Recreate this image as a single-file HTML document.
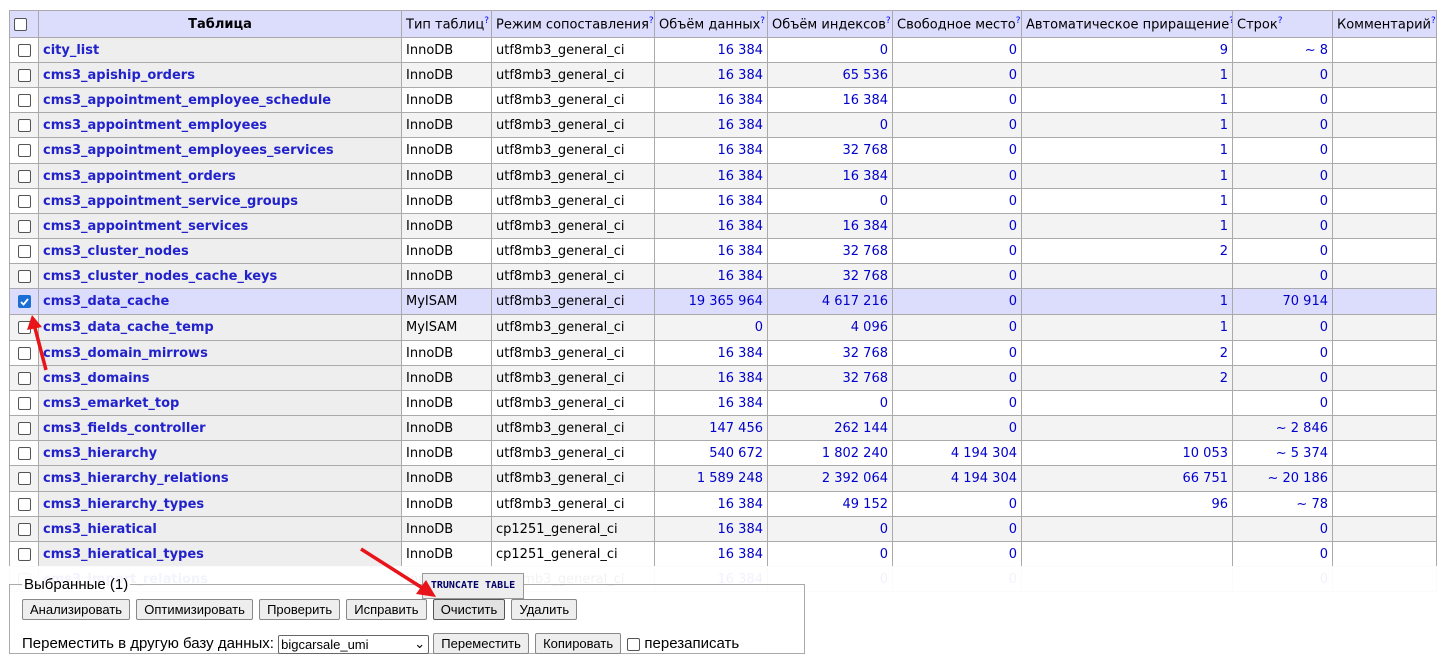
<!DOCTYPE html>
<html><head><meta charset="utf-8"><style>
body{margin:0;background:#fff;width:1445px;height:664px;overflow:hidden;position:relative;font-family:"DejaVu Sans",Verdana,sans-serif;}
table{position:absolute;left:9px;top:10px;width:1427px;border-collapse:collapse;font-size:13px;table-layout:fixed;}
td,th{border:1px solid #aaa;padding:0 4px;height:24px;white-space:nowrap;overflow:hidden;}
th{background:#dcdcfc;font-weight:normal;text-align:left;height:26px;color:#000;}
th sup{color:#00f;font-size:9px;}
td{color:#000;}
td.n{text-align:right;color:#00c;}
td.nm{background:#eee;}
td.nm a{color:#22c;font-weight:bold;text-decoration:none;}
tr.g td{background:#f3f3f3;}
tr.g td.nm{background:#eee;}
tr.s td{background:#dcdcfc;height:25px;}
tr.t td{height:25px;}
td.c{text-align:center;padding:0;}
.cb{display:inline-block;width:11px;height:11px;border:1px solid #555;border-radius:2px;background:#fff;vertical-align:middle;}
.cbk{background:#1a6fd6;border-color:#1a6fd6;position:relative;}
.cover{position:absolute;left:0;top:566px;width:1445px;height:99px;background:rgba(255,255,255,0.95);}
fieldset{position:absolute;left:9px;top:576px;width:770px;height:76px;border:1px solid #aaa;margin:0;padding:0 12px;font-family:"Liberation Sans",Arial,sans-serif;font-size:15px;}
legend{padding:0 2px;font-size:15px;}
.btn{display:inline-block;border:1px solid #888;border-radius:2px;background:#eee;padding:2px 7px;font-size:13px;margin-right:2px;}
.tip{position:absolute;left:422px;top:573px;width:100px;height:24px;background:#eee;border:1px solid #999;font-family:"DejaVu Sans Mono",monospace;font-size:10px;color:#006;font-weight:bold;line-height:24px;text-align:center;}
</style></head><body>
<table>
<colgroup><col style="width:29px"><col style="width:363px"><col style="width:90px"><col style="width:163px"><col style="width:113px"><col style="width:125px"><col style="width:129px"><col style="width:211px"><col style="width:100px"><col style="width:104px"></colgroup>
<tr><th class="c"><span class="cb"></span></th><th style="text-align:center;font-weight:bold">Таблица</th><th>Тип таблиц<sup>?</sup></th><th>Режим сопоставления<sup>?</sup></th><th>Объём данных<sup>?</sup></th><th>Объём индексов<sup>?</sup></th><th>Свободное место<sup>?</sup></th><th>Автоматическое приращение<sup>?</sup></th><th>Строк<sup>?</sup></th><th>Комментарий<sup>?</sup></th></tr>
<tr><td class="c"><span class="cb"></span></td><td class="nm"><a>city_list</a></td><td>InnoDB</td><td>utf8mb3_general_ci</td><td class="n">16 384</td><td class="n">0</td><td class="n">0</td><td class="n">9</td><td class="n">~ 8</td><td></td></tr>
<tr class="g"><td class="c"><span class="cb"></span></td><td class="nm"><a>cms3_apiship_orders</a></td><td>InnoDB</td><td>utf8mb3_general_ci</td><td class="n">16 384</td><td class="n">65 536</td><td class="n">0</td><td class="n">1</td><td class="n">0</td><td></td></tr>
<tr><td class="c"><span class="cb"></span></td><td class="nm"><a>cms3_appointment_employee_schedule</a></td><td>InnoDB</td><td>utf8mb3_general_ci</td><td class="n">16 384</td><td class="n">16 384</td><td class="n">0</td><td class="n">1</td><td class="n">0</td><td></td></tr>
<tr class="g"><td class="c"><span class="cb"></span></td><td class="nm"><a>cms3_appointment_employees</a></td><td>InnoDB</td><td>utf8mb3_general_ci</td><td class="n">16 384</td><td class="n">0</td><td class="n">0</td><td class="n">1</td><td class="n">0</td><td></td></tr>
<tr class="t"><td class="c"><span class="cb"></span></td><td class="nm"><a>cms3_appointment_employees_services</a></td><td>InnoDB</td><td>utf8mb3_general_ci</td><td class="n">16 384</td><td class="n">32 768</td><td class="n">0</td><td class="n">1</td><td class="n">0</td><td></td></tr>
<tr class="g"><td class="c"><span class="cb"></span></td><td class="nm"><a>cms3_appointment_orders</a></td><td>InnoDB</td><td>utf8mb3_general_ci</td><td class="n">16 384</td><td class="n">16 384</td><td class="n">0</td><td class="n">1</td><td class="n">0</td><td></td></tr>
<tr><td class="c"><span class="cb"></span></td><td class="nm"><a>cms3_appointment_service_groups</a></td><td>InnoDB</td><td>utf8mb3_general_ci</td><td class="n">16 384</td><td class="n">0</td><td class="n">0</td><td class="n">1</td><td class="n">0</td><td></td></tr>
<tr class="g"><td class="c"><span class="cb"></span></td><td class="nm"><a>cms3_appointment_services</a></td><td>InnoDB</td><td>utf8mb3_general_ci</td><td class="n">16 384</td><td class="n">16 384</td><td class="n">0</td><td class="n">1</td><td class="n">0</td><td></td></tr>
<tr><td class="c"><span class="cb"></span></td><td class="nm"><a>cms3_cluster_nodes</a></td><td>InnoDB</td><td>utf8mb3_general_ci</td><td class="n">16 384</td><td class="n">32 768</td><td class="n">0</td><td class="n">2</td><td class="n">0</td><td></td></tr>
<tr class="g"><td class="c"><span class="cb"></span></td><td class="nm"><a>cms3_cluster_nodes_cache_keys</a></td><td>InnoDB</td><td>utf8mb3_general_ci</td><td class="n">16 384</td><td class="n">32 768</td><td class="n">0</td><td class="n"></td><td class="n">0</td><td></td></tr>
<tr class="s"><td class="c"><span class="cb cbk"><svg width="11" height="11" style="position:absolute;left:0;top:0"><path d="M2 6l2.5 2.5L9 3" stroke="#fff" stroke-width="1.8" fill="none"/></svg></span></td><td class="nm" style="background:#dcdcfc"><a>cms3_data_cache</a></td><td>MyISAM</td><td>utf8mb3_general_ci</td><td class="n">19 365 964</td><td class="n">4 617 216</td><td class="n">0</td><td class="n">1</td><td class="n">70 914</td><td></td></tr>
<tr class="g t"><td class="c"><span class="cb"></span></td><td class="nm"><a>cms3_data_cache_temp</a></td><td>MyISAM</td><td>utf8mb3_general_ci</td><td class="n">0</td><td class="n">4 096</td><td class="n">0</td><td class="n">1</td><td class="n">0</td><td></td></tr>
<tr><td class="c"><span class="cb"></span></td><td class="nm"><a>cms3_domain_mirrows</a></td><td>InnoDB</td><td>utf8mb3_general_ci</td><td class="n">16 384</td><td class="n">32 768</td><td class="n">0</td><td class="n">2</td><td class="n">0</td><td></td></tr>
<tr class="g"><td class="c"><span class="cb"></span></td><td class="nm"><a>cms3_domains</a></td><td>InnoDB</td><td>utf8mb3_general_ci</td><td class="n">16 384</td><td class="n">32 768</td><td class="n">0</td><td class="n">2</td><td class="n">0</td><td></td></tr>
<tr><td class="c"><span class="cb"></span></td><td class="nm"><a>cms3_emarket_top</a></td><td>InnoDB</td><td>utf8mb3_general_ci</td><td class="n">16 384</td><td class="n">0</td><td class="n">0</td><td class="n"></td><td class="n">0</td><td></td></tr>
<tr class="g"><td class="c"><span class="cb"></span></td><td class="nm"><a>cms3_fields_controller</a></td><td>InnoDB</td><td>utf8mb3_general_ci</td><td class="n">147 456</td><td class="n">262 144</td><td class="n">0</td><td class="n"></td><td class="n">~ 2 846</td><td></td></tr>
<tr><td class="c"><span class="cb"></span></td><td class="nm"><a>cms3_hierarchy</a></td><td>InnoDB</td><td>utf8mb3_general_ci</td><td class="n">540 672</td><td class="n">1 802 240</td><td class="n">4 194 304</td><td class="n">10 053</td><td class="n">~ 5 374</td><td></td></tr>
<tr class="g t"><td class="c"><span class="cb"></span></td><td class="nm"><a>cms3_hierarchy_relations</a></td><td>InnoDB</td><td>utf8mb3_general_ci</td><td class="n">1 589 248</td><td class="n">2 392 064</td><td class="n">4 194 304</td><td class="n">66 751</td><td class="n">~ 20 186</td><td></td></tr>
<tr><td class="c"><span class="cb"></span></td><td class="nm"><a>cms3_hierarchy_types</a></td><td>InnoDB</td><td>utf8mb3_general_ci</td><td class="n">16 384</td><td class="n">49 152</td><td class="n">0</td><td class="n">96</td><td class="n">~ 78</td><td></td></tr>
<tr class="g"><td class="c"><span class="cb"></span></td><td class="nm"><a>cms3_hieratical</a></td><td>InnoDB</td><td>cp1251_general_ci</td><td class="n">16 384</td><td class="n">0</td><td class="n">0</td><td class="n"></td><td class="n">0</td><td></td></tr>
<tr><td class="c"><span class="cb"></span></td><td class="nm"><a>cms3_hieratical_types</a></td><td>InnoDB</td><td>cp1251_general_ci</td><td class="n">16 384</td><td class="n">0</td><td class="n">0</td><td class="n"></td><td class="n">0</td><td></td></tr>
<tr class="g"><td class="c"><span class="cb"></span></td><td class="nm"><a>cms3_import_relations</a></td><td>InnoDB</td><td>utf8mb3_general_ci</td><td class="n">16 384</td><td class="n">0</td><td class="n">0</td><td class="n"></td><td class="n">0</td><td></td></tr>
</table>
<div class="cover"></div>
<fieldset><legend>Выбранные (1)</legend>
<div style="margin-top:6px"><span class="btn">Анализировать</span> <span class="btn">Оптимизировать</span> <span class="btn">Проверить</span> <span class="btn">Исправить</span> <span class="btn" style="background:#e2e2e2;border-color:#555">Очистить</span> <span class="btn">Удалить</span></div>
<div style="margin-top:13px">Переместить в другую базу данных: <span style="display:inline-block;width:145px;border:1px solid #666;border-radius:2px;font-size:13px;padding:1px 2px;vertical-align:middle;position:relative">bigcarsale_umi<span style="position:absolute;right:3px;top:0">&#8964;</span></span> <span class="btn">Переместить</span> <span class="btn">Копировать</span> <span class="cb"></span> перезаписать</div>
</fieldset>
<div class="tip">TRUNCATE TABLE</div>
<svg width="1445" height="664" style="position:absolute;left:0;top:0;pointer-events:none">
<path d="M361 549L424 589" stroke="#e8141a" stroke-width="3.5"/><path d="M436 597L416 594L426 580Z" fill="#e8141a"/>
<path d="M46 370L35 328" stroke="#e8141a" stroke-width="3.5"/><path d="M32 315L27 330L42 327Z" fill="#e8141a"/>
</svg>
</body></html>
